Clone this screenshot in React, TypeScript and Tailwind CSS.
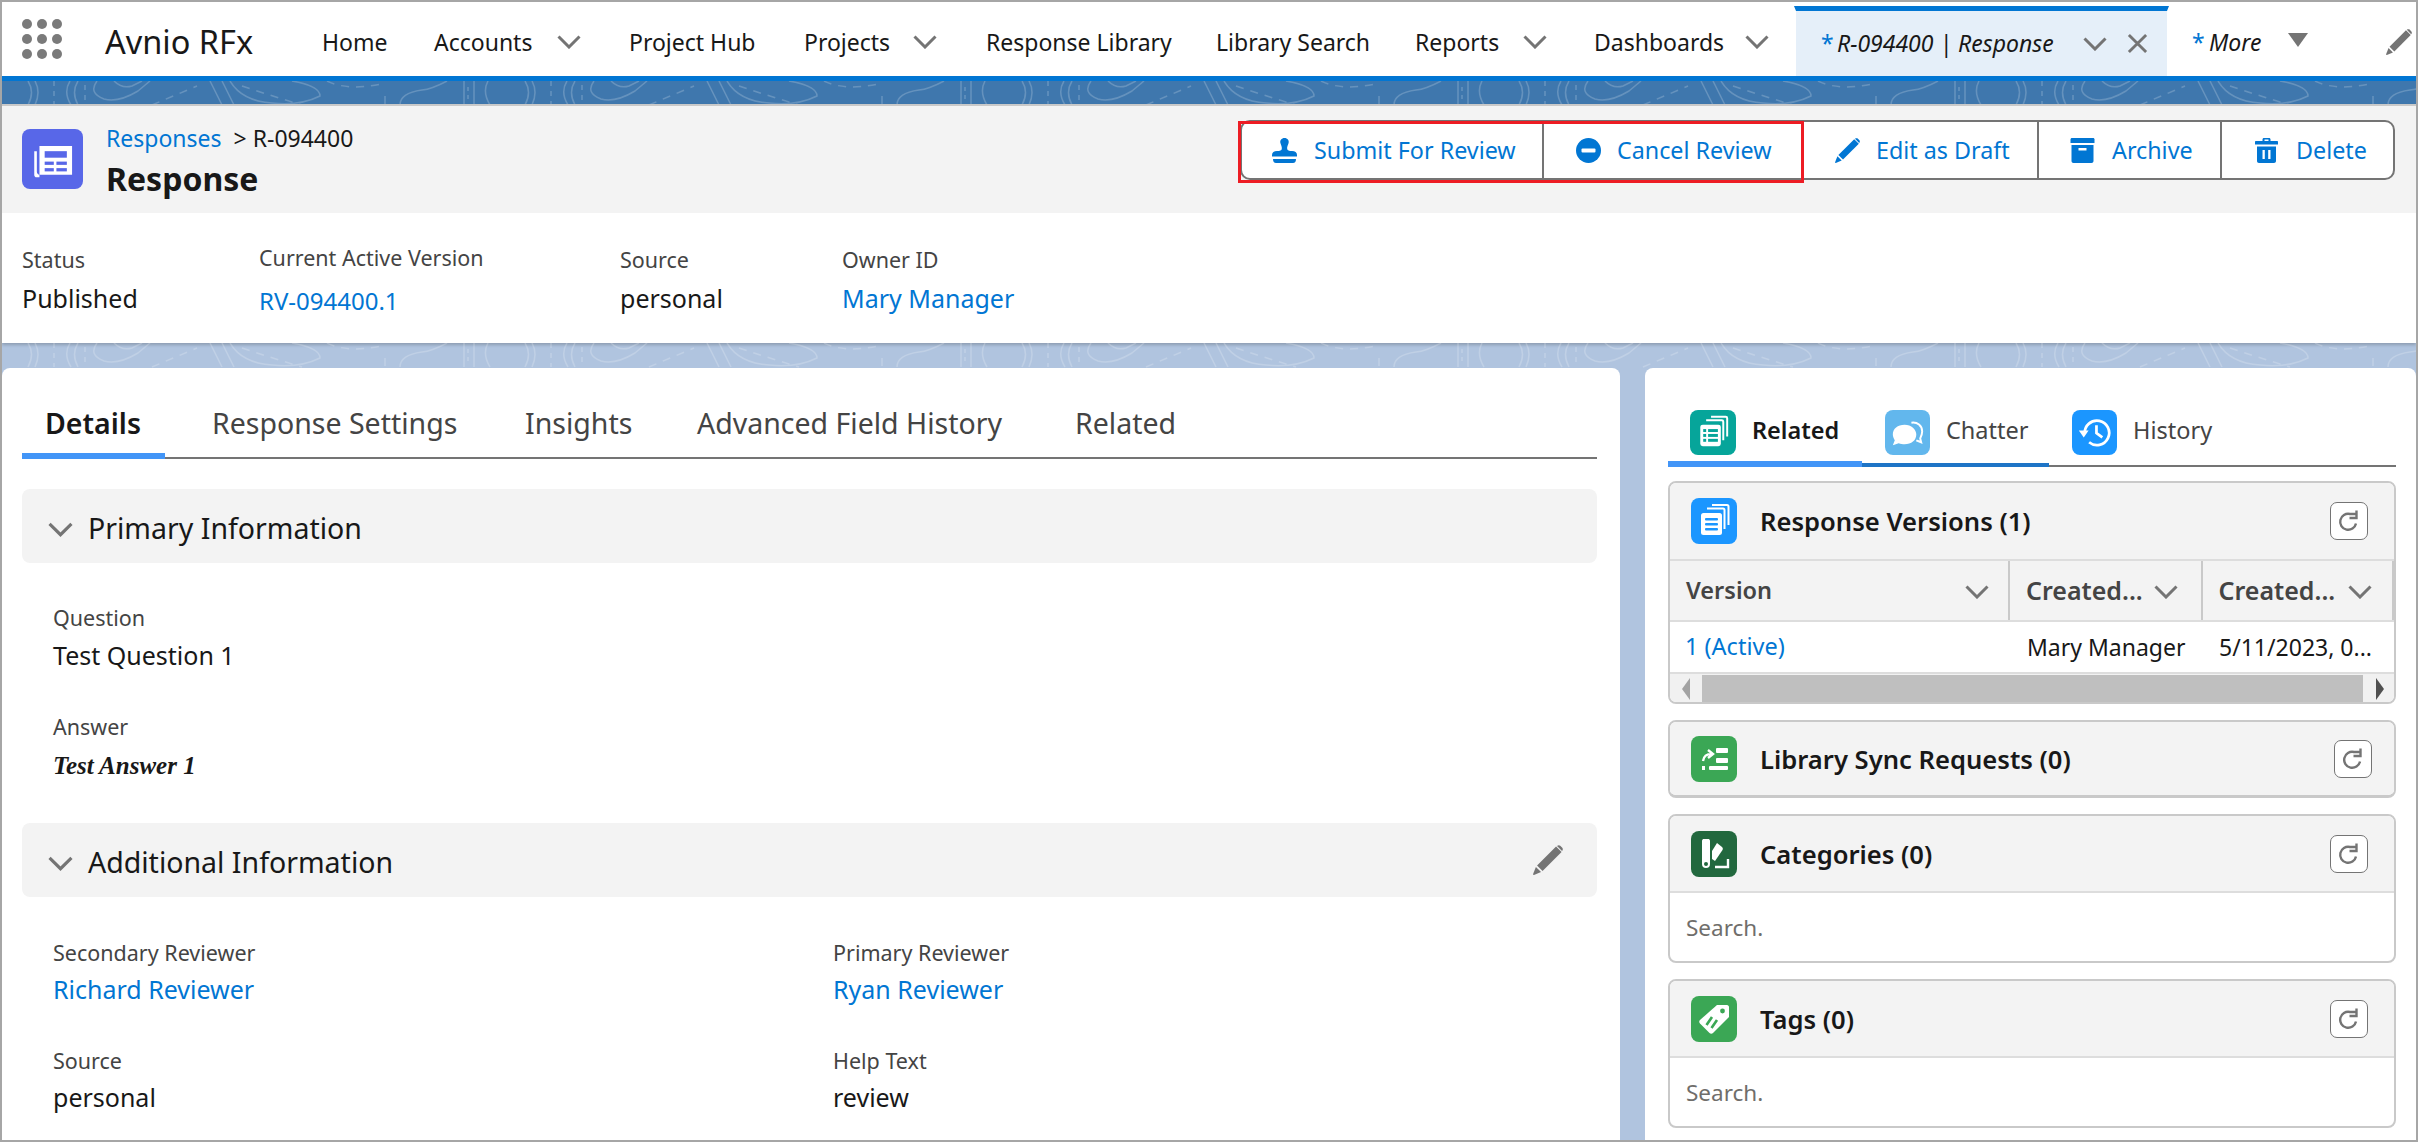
import { ReactNode } from 'react'

const Chevron = ({ className = 'w-[24px] h-[14px]' }: { className?: string }) => (
  <svg viewBox="0 0 24 14" className={`${className} shrink-0`} fill="none">
    <path d="M1.5 1.5 L12 12 L22.5 1.5" stroke="#747474" strokeWidth="3" />
  </svg>
)

// contour lines of the page background, one tile is 497px wide
const Contours = ({ id, y = 0 }: { id: string; y?: number }) => (
  <svg className="absolute inset-0 w-full h-full" fill="none">
    <defs>
      <pattern id={id} width="497" height="60" patternUnits="userSpaceOnUse" y={y}>
        <g stroke="#ffffff" strokeOpacity="0.2" strokeWidth="1.5">
          <path d="M26 0 Q33 11 26 24 M33 0 Q39 11 33 24 M68 0 Q61 11 69 24 M76 0 Q69 11 76 24" />
          <path d="M52 0 V24 M83 4 V22" strokeDasharray="5 5" />
          <path d="M95 0 Q86 12 102 18 Q116 22 136 10 L148 0 M112 0 Q120 8 130 5 L140 0" />
          <path d="M150 24 L195 5" strokeDasharray="8 7" />
          <path d="M208 0 L220 24 M220 0 L232 24 M228 0 Q240 20 270 22 Q298 25 318 15 Q318 5 290 0" />
          <path d="M240 5 Q270 15 300 24" strokeDasharray="8 7" />
          <path d="M325 0 Q345 10 380 3 M383 15 V24" strokeDasharray="8 7" />
          <path d="M398 24 Q398 12 420 9 Q430 8 445 0" />
          <path d="M462 0 V24 M472 0 V24 M486 0 Q480 11 488 24" />
          <path d="M466 6 V20" strokeDasharray="4 4" />
        </g>
      </pattern>
    </defs>
    <rect width="100%" height="100%" fill={`url(#${id})`} />
  </svg>
)

const NavLink = ({ label, w, textW }: { label: string; w: string; textW?: string }) => (
  <div className={`flex items-center shrink-0 ${w}`}>
    <span className={textW}>{label}</span>
    {textW && <Chevron />}
  </div>
)

const StampIcon = () => (
  <svg viewBox="0 0 25 25" className="w-[25px] h-[25px] shrink-0" fill="#0176d3">
    <path d="M12.5 0 C15.5 0 17.2 2.4 16.6 5 C16 7.4 14.8 8.6 15.2 11 C15.5 12.6 17 13 20 13 C23 13 25 14.4 25 17 V18.5 H0 V17 C0 14.4 2 13 5 13 C8 13 9.5 12.6 9.8 11 C10.2 8.6 9 7.4 8.4 5 C7.8 2.4 9.5 0 12.5 0Z" />
    <path d="M1 21 H24 C24 23.5 23 25 21 25 H4 C2 25 1 23.5 1 21Z" />
  </svg>
)

const MinusIcon = () => (
  <svg viewBox="0 0 25 25" className="w-[25px] h-[25px] shrink-0">
    <circle cx="12.5" cy="12.5" r="12.5" fill="#0176d3" />
    <rect x="5.5" y="10.5" width="14" height="4" rx="1" fill="#ffffff" />
  </svg>
)

const PencilIcon = ({ color = '#0176d3', className = 'w-[25px] h-[25px]' }: { color?: string; className?: string }) => (
  <svg viewBox="0 0 25 25" className={`${className} shrink-0`} fill={color}>
    <path d="M19.2 1.2 L23.8 5.8 L8 21.6 L3.4 17 Z" />
    <path d="M20.3 0.6 C21 0 22 0 22.7 0.6 L24.4 2.3 C25 3 25 4 24.4 4.7 L24.2 5 L20 0.8Z" />
    <path d="M2.4 18.3 L6.7 22.6 L0.8 24.9 C0.3 25 0 24.7 0.1 24.2 Z" />
  </svg>
)

const ArchiveIcon = () => (
  <svg viewBox="0 0 25 25" className="w-[25px] h-[25px] shrink-0" fill="#0176d3">
    <path d="M2 0 H23 C24 0 24.5 .6 24.5 1.5 V5 H.5 V1.5 C.5 .6 1 0 2 0Z" />
    <path d="M1.5 7 H23.5 V23 C23.5 24.2 22.7 25 21.5 25 H3.5 C2.3 25 1.5 24.2 1.5 23Z M8.5 10 V12.5 H16.5 V10Z" fillRule="evenodd" />
  </svg>
)

const TrashIcon = () => (
  <svg viewBox="0 0 23 25" className="w-[23px] h-[25px] shrink-0" fill="#0176d3">
    <path d="M9 0 H14 C15 0 15.5 .7 15.5 1.5 V3 H22 C22.6 3 23 3.4 23 4 V6.5 H0 V4 C0 3.4 .4 3 1 3 H7.5 V1.5 C7.5 .7 8 0 9 0Z M9.5 1.5 V3 H13.5 V1.5Z" fillRule="evenodd" />
    <path d="M2 8.5 H21 V23 C21 24.2 20.2 25 19 25 H4 C2.8 25 2 24.2 2 23Z M7.5 12 V21 H9.8 V12Z M13.2 12 V21 H15.5 V12Z" fillRule="evenodd" />
  </svg>
)

const Tile = ({ bg, children, className = 'w-[46px] h-[46px]' }: { bg: string; children: ReactNode; className?: string }) => (
  <div className={`${bg} ${className} rounded-[8px] shrink-0`}>
    <svg viewBox="0 0 46 46" className="w-full h-full">
      {children}
    </svg>
  </div>
)

const PageStack = ({ color, lines }: { color: string; lines: 'list' | 'text' }) => (
  <>
    <path d="M16 10.5 H32 C33 10.5 33.5 11 33.5 12 V31 M21 7 H36 C37 7 37.5 7.5 37.5 8.5 V27" fill="none" stroke="#fff" strokeWidth="2" />
    <rect x="10" y="15" width="21" height="22" rx="2.5" fill="#fff" />
    {lines === 'list' ? (
      <g fill={color}>
        <rect x="13" y="19.5" width="3" height="3" />
        <rect x="18" y="19.5" width="10" height="3" />
        <rect x="13" y="24.5" width="3" height="3" />
        <rect x="18" y="24.5" width="10" height="3" />
        <rect x="13" y="29.5" width="3" height="3" />
        <rect x="18" y="29.5" width="10" height="3" />
      </g>
    ) : (
      <g fill={color}>
        <rect x="14" y="20" width="13" height="2.6" rx="1" />
        <rect x="14" y="25" width="13" height="2.6" rx="1" />
        <rect x="14" y="30" width="13" height="2.6" rx="1" />
      </g>
    )}
  </>
)

const Refresh = ({ className = 'mr-[26px]' }: { className?: string }) => (
  <div className={`ml-auto ${className} w-[38px] h-[38px] rounded-[7px] border border-[#747474] bg-white flex items-center justify-center`}>
    <svg viewBox="0 0 24 24" className="w-[24px] h-[24px]" fill="none">
      <path d="M19 14.5 A8 8 0 1 1 13 5 H19" stroke="#747474" strokeWidth="2.4" />
      <path d="M19.5 1.5 V9 H12.5" stroke="#747474" strokeWidth="2.4" />
    </svg>
  </div>
)

const CardHeader = ({ icon, title, refresh, h = 'h-[76px]' }: { icon: ReactNode; title: string; refresh?: string; h?: string }) => (
  <div className={`flex items-center ${h} bg-[#f3f3f3] pl-[21px]`}>
    {icon}
    <span className="ml-[23px] text-[25.6px] font-semibold text-[#181818] pt-[3px]">{title}</span>
    <Refresh className={refresh} />
  </div>
)

const Label = ({ children, className = '' }: { children: ReactNode; className?: string }) => (
  <div className={`text-[21.5px] leading-[30px] text-[#444444] ${className}`}>{children}</div>
)

const Value = ({ children, link, className = 'text-[25px]' }: { children: ReactNode; link?: boolean; className?: string }) => (
  <div className={`leading-[34px] ${link ? 'text-[#0176d3]' : 'text-[#181818]'} ${className}`}>{children}</div>
)

const SectionHeader = ({ title, edit }: { title: string; edit?: boolean }) => (
  <div className="flex items-center h-[74px] rounded-[8px] bg-[#f3f3f3] pl-[26px] pr-[34px]">
    <Chevron className="w-[25px] h-[15px] mt-[6px]" />
    <span className="ml-[15px] text-[28.5px] text-[#181818] pt-[4px]">{title}</span>
    {edit && (
      <span className="ml-auto">
        <PencilIcon color="#747474" className="w-[30px] h-[30px]" />
      </span>
    )}
  </div>
)

const ColHead = ({ label, w, labelW, text }: { label: string; w: string; labelW: string; text: string }) => (
  <div className={`${w} flex items-center h-full border-r-2 border-[#c9c9c9] pl-[16px]`}>
    <span className={`${labelW} ${text} font-semibold text-[#444444]`}>{label}</span>
    <Chevron className="w-[24px] h-[14px] mt-[3px]" />
  </div>
)

export default function App() {
  return (
    <div className="relative w-[2418px] h-[1142px] overflow-hidden border-2 border-[#a6a6a6] bg-[#b0c4df] font-['Noto_Sans',sans-serif] text-[#181818]">
      <nav className="flex items-center h-[74px] pt-[6px] pl-[20px] bg-white text-[23px]">
        <div className="w-[84px] shrink-0 -mt-[6px]">
          <div className="grid grid-cols-[10px_10px_10px] gap-[5px]">
            {[0, 1, 2, 3, 4, 5, 6, 7, 8].map((i) => (
              <span key={i} className="w-[10px] h-[10px] rounded-full bg-[#7a7a7a]" />
            ))}
          </div>
        </div>
        <div className="w-[216px] shrink-0 text-[32.5px] -ml-[1px] mr-[1px]">Avnio RFx</div>
        <NavLink label="Home" w="w-[112px]" />
        <NavLink label="Accounts" w="w-[195px]" textW="w-[123px]" />
        <NavLink label="Project Hub" w="w-[175px]" />
        <NavLink label="Projects" w="w-[182px]" textW="w-[109px]" />
        <NavLink label="Response Library" w="w-[230px]" />
        <NavLink label="Library Search" w="w-[199px]" />
        <NavLink label="Reports" w="w-[179px]" textW="w-[108px]" />
        <NavLink label="Dashboards" w="w-[200px]" textW="w-[151px]" />
        <div className="flex items-center shrink-0 self-start -mt-[2px] w-[375px] h-[70px] border-t-[5px] border-x-2 border-x-white border-t-[#0176d3] bg-[#e5eff9] pl-[25px] italic">
          <span className="w-[16px] not-italic text-[#0176d3]">*</span>
          <span className="w-[246px] whitespace-nowrap">R-094400 | Response</span>
          <Chevron />
          <svg viewBox="0 0 22 22" className="ml-[20px] w-[21px] h-[21px] shrink-0" fill="none">
            <path d="M2 2 L20 20 M20 2 L2 20" stroke="#747474" strokeWidth="3" />
          </svg>
        </div>
        <div className="ml-[23px] flex items-center shrink-0 italic">
          <span className="w-[17px] not-italic text-[#0176d3]">*</span>
          <span className="w-[79px]">More</span>
          <svg viewBox="0 0 20 14" className="w-[20px] h-[14px] -mt-[4px]">
            <path d="M0 0 H20 L10 14Z" fill="#747474" />
          </svg>
        </div>
        <span className="ml-[78px] shrink-0">
          <PencilIcon color="#747474" className="w-[26px] h-[26px]" />
        </span>
      </nav>
      <div className="relative h-[28px] border-t-[5px] border-[#0176d3] bg-[#3f77ad]">
        <Contours id="banner" />
      </div>

      <section className="relative bg-white shadow-[0_2px_3px_rgba(0,0,0,0.2)] border-t-2 border-[#c9c9c9]">
        <div className="flex items-start h-[107px] bg-[#f3f3f3] pl-[20px] pr-[21px]">
          <div className="mt-[23px]">
            <Tile bg="bg-[#5867e8]" className="w-[61px] h-[60px]">
              <g fill="#fff">
                <path d="M13 13 H38 V35 H13 Z" />
                <path d="M9 17 H11 V33 C11 34 12 35 13 35 V37 H11 C9.5 37 9 36 9 35Z" />
              </g>
              <g fill="#5867e8">
                <rect x="17" y="17" width="17" height="5" />
                <rect x="17" y="25" width="7" height="2.5" />
                <rect x="26" y="25" width="8" height="2.5" />
                <rect x="17" y="30" width="7" height="2.5" />
                <rect x="26" y="30" width="8" height="2.5" />
              </g>
            </Tile>
          </div>
          <div className="ml-[23px] mt-[16px] flex flex-col">
            <div className="text-[23px] leading-[32px] text-[#181818]">
              <span className="text-[#0176d3]">Responses</span> &nbsp;&gt; R-094400
            </div>
            <div className="mt-[5px] text-[32px] leading-[40px] font-bold">Response</div>
          </div>
          <div className="relative ml-auto mt-[14px] flex h-[60px] rounded-[10px] border-2 border-[#747474] bg-white text-[23.3px] text-[#0176d3]">
            <div className="flex items-center w-[302px] pl-[30px] gap-[17px] border-r-2 border-[#747474]">
              <StampIcon />
              Submit For Review
            </div>
            <div className="flex items-center w-[260px] pl-[32px] gap-[16px] border-r-2 border-[#747474]">
              <MinusIcon />
              Cancel Review
            </div>
            <div className="flex items-center w-[235px] pl-[31px] gap-[16px] border-r-2 border-[#747474]">
              <PencilIcon />
              Edit as Draft
            </div>
            <div className="flex items-center w-[183px] pl-[31px] gap-[17px] border-r-2 border-[#747474]">
              <ArchiveIcon />
              Archive
            </div>
            <div className="flex items-center w-[171px] pl-[33px] gap-[18px]">
              <TrashIcon />
              Delete
            </div>
            <div className="absolute -left-[4px] -top-[1px] w-[566px] h-[62px] border-[3px] border-[#ed1c24]" />
          </div>
        </div>
        <div className="flex h-[130px] pl-[20px]">
          <div className="w-[237px] pt-[32px]">
            <Label>Status</Label>
            <Value className="text-[25px] mt-[6px]">Published</Value>
          </div>
          <div className="w-[361px] pt-[30px]">
            <Label>Current Active Version</Label>
            <Value link className="text-[24px] mt-[11px]">RV-094400.1</Value>
          </div>
          <div className="w-[222px] pt-[32px]">
            <Label>Source</Label>
            <Value className="text-[25px] mt-[6px]">personal</Value>
          </div>
          <div className="pt-[32px]">
            <Label>Owner ID</Label>
            <Value link className="text-[25px] mt-[6px]">Mary Manager</Value>
          </div>
        </div>
      </section>

      <div className="relative h-[25px]">
        <Contours id="gap" />
      </div>

      <main className="flex gap-[25px] h-[772px]">
        <div className="w-[1618px] rounded-t-[8px] bg-white pl-[20px] pr-[23px]">
          <div className="flex mt-[32px] h-[59px] border-b-2 border-[#747474] text-[28.5px] text-[#444444]">
            <div className="w-[143px] h-[59px] pl-[23px] leading-[46px] font-semibold text-[#181818] border-b-[6px] border-[#4295f7]">Details</div>
            <div className="ml-[47px] w-[313px] leading-[46px]">Response Settings</div>
            <div className="w-[172px] leading-[46px]">Insights</div>
            <div className="w-[378px] leading-[46px]">Advanced Field History</div>
            <div className="leading-[46px]">Related</div>
          </div>
          <div className="mt-[30px]">
            <SectionHeader title="Primary Information" />
          </div>
          <div className="pl-[31px] pt-[40px]">
            <Label>Question</Label>
            <Value className="text-[25px] mt-[5px]">Test Question 1</Value>
            <Label className="mt-[40px]">Answer</Label>
            <Value className="text-[25px] mt-[7px] font-['Liberation_Serif',serif] font-bold italic">Test Answer 1</Value>
          </div>
          <div className="mt-[40px]">
            <SectionHeader title="Additional Information" edit />
          </div>
          <div className="grid grid-cols-[780px_1fr] pl-[31px] pt-[41px] gap-y-[40px]">
            <div>
              <Label>Secondary Reviewer</Label>
              <Value link className="text-[25px] mt-[4px]">Richard Reviewer</Value>
            </div>
            <div>
              <Label>Primary Reviewer</Label>
              <Value link className="text-[25px] mt-[4px]">Ryan Reviewer</Value>
            </div>
            <div>
              <Label>Source</Label>
              <Value className="text-[25px] mt-[4px]">personal</Value>
            </div>
            <div>
              <Label>Help Text</Label>
              <Value className="text-[25px] mt-[4px]">review</Value>
            </div>
          </div>
        </div>

        <div className="w-[771px] rounded-t-[8px] bg-white pl-[23px] pr-[20px]">
          <div className="flex mt-[42px] h-[57px] border-b-2 border-[#747474] text-[23.5px] text-[#444444]">
            <div className="flex items-start gap-[16px] w-[194px] h-[57px] pl-[22px] font-semibold text-[#181818] border-b-[6px] border-[#4295f7]">
              <Tile bg="bg-[#06a59a]" className="w-[46px] h-[45px]">
                <PageStack color="#06a59a" lines="list" />
              </Tile>
              <span className="leading-[40px]">Related</span>
            </div>
            <div className="flex items-start gap-[16px] w-[187px] h-[57px] pl-[23px] border-b-4 border-[#1e74c6]">
              <Tile bg="bg-[#62b7ed]" className="w-[45px] h-[45px]">
                <path d="M27 13 C33 12 38 16 38 22 C38 25 37 27 36 29 L37 33 L32 31" fill="none" stroke="#fff" strokeWidth="2" />
                <path d="M20 15 C27 15 32 20 32 25 C32 31 27 35 20 35 C18 35 16 35 14 34 L8 36 L10 31 C9 29 8 27 8 25 C8 19 13 15 20 15Z" fill="#fff" />
              </Tile>
              <span className="leading-[40px]">Chatter</span>
            </div>
            <div className="flex items-start gap-[16px] pl-[23px]">
              <Tile bg="bg-[#1b96ff]" className="w-[45px] h-[45px]">
                <path d="M13 24 A12.5 12.5 0 1 1 17.5 33" fill="none" stroke="#fff" strokeWidth="2.8" />
                <path d="M7 21 H17 L12 28Z" fill="#fff" />
                <path d="M25 15.5 V23.5 L31 28" fill="none" stroke="#fff" strokeWidth="2.8" />
              </Tile>
              <span className="leading-[40px]">History</span>
            </div>
          </div>

          <div className="mt-[14px] h-[223px] rounded-[8px] border-2 border-[#c9c9c9] overflow-hidden">
            <CardHeader
              title="Response Versions (1)"
              icon={
                <Tile bg="bg-[#1b96ff]">
                  <PageStack color="#1b96ff" lines="text" />
                </Tile>
              }
            />
            <div className="flex h-[63px] bg-[#f3f3f3] border-y-2 border-y-[#dddddd]">
              <ColHead label="Version" w="w-[341px]" labelW="w-[279px]" text="text-[23.5px]" />
              <ColHead label="Created..." w="w-[193px]" labelW="w-[128px]" text="text-[25px]" />
              <ColHead label="Created..." w="w-[192px]" labelW="w-[129px]" text="text-[25px]" />
            </div>
            <div className="flex items-center h-[50px] text-[23px] text-[#181818]">
              <span className="w-[341px] pl-[15px] text-[23.5px] text-[#0176d3]">1 (Active)</span>
              <span className="w-[193px] pl-[16px]">Mary Manager</span>
              <span className="pl-[15px]">5/11/2023, 0...</span>
            </div>
            <div className="flex items-center h-[32px] bg-[#f1f1f1] border-t-2 border-[#dddddd]">
              <svg viewBox="0 0 8 22" className="ml-[12px] w-[8px] h-[22px]">
                <path d="M8 0 V22 L0 11Z" fill="#a3a3a3" />
              </svg>
              <div className="ml-[12px] w-[661px] h-[28px] bg-[#bfbfbf]" />
              <svg viewBox="0 0 8 22" className="ml-[13px] w-[8px] h-[22px]">
                <path d="M0 0 V22 L8 11Z" fill="#505050" />
              </svg>
            </div>
          </div>

          <div className="mt-[16px] h-[78px] rounded-[8px] border-2 border-b-[3px] border-[#c9c9c9] overflow-hidden">
            <CardHeader
              title="Library Sync Requests (0)"
              refresh="mr-[22px]"
              h="h-[73px]"
              icon={
                <Tile bg="bg-[#3ba755]">
                  <path d="M12 25 C13 20 15 18 21 18 M17 14 L22 18 L17 22" fill="none" stroke="#fff" strokeWidth="2.4" />
                  <rect x="25" y="12" width="12" height="5" rx="1" fill="#fff" />
                  <rect x="25" y="22" width="12" height="5" rx="1" fill="#fff" />
                  <rect x="11" y="30" width="3" height="4" fill="#fff" />
                  <rect x="18" y="30" width="19" height="4" rx="1" fill="#fff" />
                </Tile>
              }
            />
          </div>

          <div className="mt-[16px] h-[149px] rounded-[8px] border-2 border-[#c9c9c9] overflow-hidden">
            <CardHeader
              title="Categories (0)"
              h="h-[75px]"
              icon={
                <Tile bg="bg-[#22683e]">
                  <path d="M11 10 C11 8.5 12 8 13 8 H17 C18 8 19 8.5 19 10 V33 A4 4 0 0 1 11 33Z M15 31 A2 2 0 1 0 15 35 A2 2 0 1 0 15 31Z" fill="#fff" fillRule="evenodd" />
                  <path d="M21 28 V20 L26 12 L31 16 C32 17 32 18 31.5 19 L24 30Z" fill="#fff" />
                  <path d="M24 36 H37 V28" fill="none" stroke="#fff" strokeWidth="2.4" />
                </Tile>
              }
            />
            <div className="border-t-2 border-[#dddddd] pl-[16px] pt-[18px] text-[22.5px] text-[#706e6b]">Search.</div>
          </div>

          <div className="mt-[16px] h-[149px] rounded-[8px] border-2 border-[#c9c9c9] overflow-hidden">
            <CardHeader
              title="Tags (0)"
              h="h-[75px]"
              icon={
                <Tile bg="bg-[#3ba755]">
                  <path d="M26 9 H36 C37 9 38 10 38 11 V21 L22 37 C21 38 19.5 38 18.5 37 L9 27.5 C8 26.5 8 25 9 24Z" fill="#fff" />
                  <circle cx="31.5" cy="15" r="2.4" fill="#3ba755" />
                  <path d="M21 21 L15.5 29 M26 24 L20.5 32" stroke="#3ba755" strokeWidth="2.6" />
                </Tile>
              }
            />
            <div className="border-t-2 border-[#dddddd] pl-[16px] pt-[18px] text-[22.5px] text-[#706e6b]">Search.</div>
          </div>
        </div>
      </main>
    </div>
  )
}
